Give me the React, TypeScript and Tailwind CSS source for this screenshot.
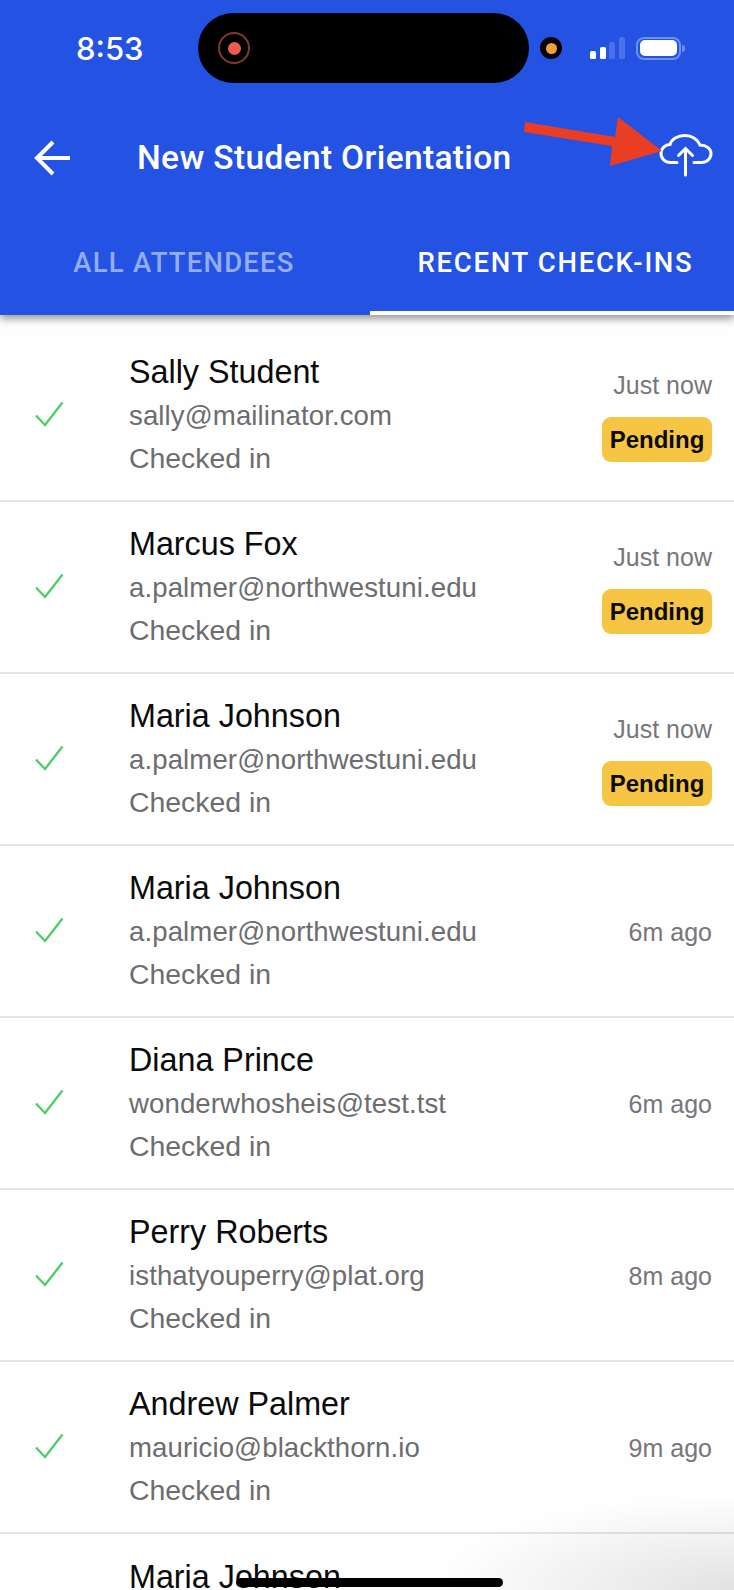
import { Fragment } from 'react'

const sans = { fontFamily: '"Liberation Sans", Arial, sans-serif' }

const attendees = [
  { name: 'Sally Student', email: 'sally@mailinator.com', time: 'Just now', pending: true },
  { name: 'Marcus Fox', email: 'a.palmer@northwestuni.edu', time: 'Just now', pending: true },
  { name: 'Maria Johnson', email: 'a.palmer@northwestuni.edu', time: 'Just now', pending: true },
  { name: 'Maria Johnson', email: 'a.palmer@northwestuni.edu', time: '6m ago', pending: false },
  { name: 'Diana Prince', email: 'wonderwhosheis@test.tst', time: '6m ago', pending: false },
  { name: 'Perry Roberts', email: 'isthatyouperry@plat.org', time: '8m ago', pending: false },
  { name: 'Andrew Palmer', email: 'mauricio@blackthorn.io', time: '9m ago', pending: false },
  { name: 'Maria Johnson', email: 'a.palmer@northwestuni.edu', time: '9m ago', pending: false },
]

function CheckMark() {
  return (
    <svg width="30" height="26" viewBox="0 0 30 26" fill="none" className="mb-[2px] shrink-0">
      <path d="M2 14.5 L11 24 L28.5 1.5" stroke="#4fcf6b" strokeWidth="2.4" />
    </svg>
  )
}

function StatusBar() {
  return (
    <div className="flex h-[83px] items-center pt-[13px] text-white">
      <span className="ml-[76px] w-[122px] font-['Inter'] text-[31px] font-medium leading-none">8:53</span>
      <div className="flex h-[70px] w-[331px] items-center rounded-[35px] bg-black pl-[20px]">
        <div className="flex h-[32px] w-[32px] items-center justify-center rounded-full border-2 border-[#86382e]">
          <div className="h-[13px] w-[13px] rounded-full bg-[#ee5a4e]" />
        </div>
      </div>
      <div className="ml-[11px] flex h-[22px] w-[22px] items-center justify-center rounded-full bg-black">
        <div className="h-[11px] w-[11px] rounded-full bg-[#f2a03c]" />
      </div>
      <div className="ml-[28px] flex items-end gap-[3.5px]">
        <div className="h-[8px] w-[6px] rounded-[1.5px] bg-white" />
        <div className="h-[12px] w-[6px] rounded-[1.5px] bg-white" />
        <div className="h-[17px] w-[6px] rounded-[1.5px] bg-[#4a71ea]" />
        <div className="h-[22px] w-[6px] rounded-[1.5px] bg-[#4a71ea]" />
      </div>
      <div className="ml-[11px] flex h-[23px] w-[45px] items-center justify-center rounded-[8px] border-2 border-[#6e90f0]">
        <div className="h-[16px] w-[37px] rounded-[5px] bg-white" />
      </div>
      <div className="ml-[1px] h-[7px] w-[3px] rounded-r-full bg-[#6e90f0]" />
    </div>
  )
}

function Row({ name, email, time, pending, last }: { name: string; email: string; time: string; pending: boolean; last?: boolean }) {
  return (
    <div className={`flex h-[172px] items-center pl-[34px] pr-[22px] ${last ? '' : 'border-b-2 border-[#e4e4e6]'}`}>
      <CheckMark />
      <div className="ml-[65px] flex flex-1 flex-col" style={sans}>
        <div className="h-[44px] pt-[1px] text-[32.3px] leading-[43px] text-[#0b0b0b]">{name}</div>
        <div className="h-[43px] text-[27.6px] leading-[43px] tracking-[0.1px] text-[#6d6d70]">{email}</div>
        <div className="h-[43px] text-[28.4px] leading-[43px] text-[#6d6d70]">Checked in</div>
      </div>
      <div className="flex flex-col items-end pt-[2px]" style={sans}>
        <div className="text-[25px] leading-[30px] text-[#77767a]">{time}</div>
        {pending && (
          <div className="mt-[17px] flex h-[45px] w-[110px] items-center justify-center rounded-[9px] bg-[#f6c544] text-[24px] font-bold text-[#0b0b0b]">
            Pending
          </div>
        )}
      </div>
    </div>
  )
}

export default function App() {
  return (
    <div className="relative h-[1590px] w-[734px] overflow-hidden bg-[#fefefe]">
      <header className="relative z-10 h-[315px] bg-[#2453e3] shadow-[0_4px_8px_rgba(0,0,0,0.4)]">
        <StatusBar />
        <div className="mt-[57px] flex h-[36px] items-center">
          <svg width="38" height="36" viewBox="0 0 38 36" fill="none" className="ml-[34px]">
            <path d="M36 18 H3 M19 2 L3 18 L19 34" stroke="white" strokeWidth="4" />
          </svg>
          <h1 className="ml-[65px] font-['Roboto'] text-[33.5px] font-medium tracking-[0.35px] text-white">New Student Orientation</h1>
        </div>
        <div className="mt-[65px] flex h-[74px]">
          <div className="flex w-[370px] justify-center pr-[2px] pt-[2px] font-['Roboto'] text-[27.5px] font-medium tracking-[1.2px] text-[#93adf3]">
            <span className="leading-[40px]">ALL ATTENDEES</span>
          </div>
          <div className="flex flex-1 flex-col">
            <div className="flex flex-1 justify-center pl-[7px] pt-[2px] font-['Roboto'] text-[27.5px] font-medium tracking-[1.7px] text-white">
              <span className="leading-[40px]">RECENT CHECK-INS</span>
            </div>
            <div className="h-[4px] bg-white" />
          </div>
        </div>
        <svg width="54" height="44" viewBox="0 0 54 44" fill="none" className="absolute left-[659px] top-[134px]">
          <path
            d="M18 28.5 H11.5 C6 28.5 2 24.5 2 19.5 C2 14.5 6 10.5 11 10.5 C12.5 5 18.5 1.5 26 1.5 C33 1.5 39 5.5 41 11 C47 11 52 14.5 52 19.5 C52 24.5 48 28.5 42.5 28.5 H35"
            stroke="white"
            strokeWidth="3"
            strokeLinecap="round"
          />
          <path d="M26.5 41 V15 M19.5 21.5 L26.5 14.5 L33.5 21.5" stroke="white" strokeWidth="3" strokeLinecap="round" />
        </svg>
      </header>

      <div className="pt-[15px]">
        {attendees.map((a, i) => (
          <Fragment key={i}>
            <Row {...a} pending={a.pending} last={i === attendees.length - 1} />
          </Fragment>
        ))}
      </div>

      {/* annotation arrow sits on top of the screenshot */}
      <svg width="160" height="60" viewBox="0 0 160 60" className="absolute left-[520px] top-[112px] z-20">
        <polygon points="5,10 4,20 92,34 90,54 142,39 98,5 95,25" fill="#e93d24" />
      </svg>

      {/* corner shade from the capture */}
      <div className="pointer-events-none absolute bottom-0 right-0 z-20 h-[95px] w-[300px] bg-[radial-gradient(ellipse_at_bottom_right,rgba(0,0,0,0.11),rgba(0,0,0,0)_70%)]" />
      <div className="absolute bottom-[3px] left-[236px] z-30 h-[9px] w-[267px] rounded-full bg-black" />
    </div>
  )
}
